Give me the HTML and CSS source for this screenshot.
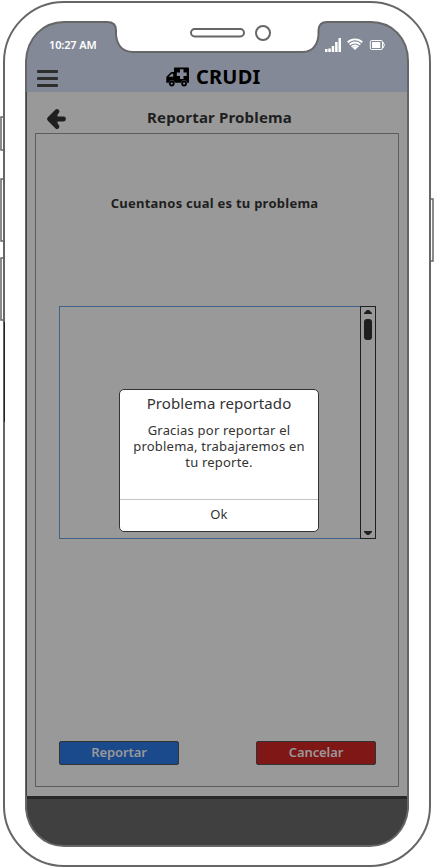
FILE: index.html
```
<!DOCTYPE html>
<html lang="es">
<head>
<meta charset="utf-8">
<meta name="viewport" content="width=device-width, initial-scale=1">
<title>CRUDI</title>
<link rel="stylesheet" href="styles.css">
</head>
<body>
<div class="device">
  <div class="screen">
    <header class="topbar">
      <div class="status"><span class="time">10:27 AM</span>
        <svg class="indicators" width="62" height="16" viewBox="0 0 62 16" fill="#fff">
          <path d="M0 12h2.500v3H0zM3.300 11.500h2.500V15H3.300zM6.700 9h2.500v6H6.700zM10.100 5h2.500v10h-2.500zM13.500 1H16v14h-2.500z"/>
          <path d="M30 13l-2.500-2.600a3.600 3.600 0 0 1 5 0z"/>
          <path d="M22.700 5.300a10.500 10.500 0 0 1 14.600 0M24.700 7.700a7.500 7.500 0 0 1 10.600 0M26.600 9.800a4.800 4.800 0 0 1 6.800 0" fill="none" stroke="#fff" stroke-width="1.900"/>
          <rect x="45.300" y="3.500" width="12.200" height="9" rx="1.400" fill="none" stroke="#fff"/>
          <path d="M47 5h8.300v6H47z"/><path d="M58 5q2.800 3 0 6" fill="none" stroke="#fff"/>
        </svg>
      </div>
      <div class="appbar">
        <div class="menu"><i></i><i></i><i></i></div>
        <div class="brand">
          <svg width="24" height="20" viewBox="0 0 24 20">
            <path d="M9 .5h13q1 0 1 1v14.200h-1.800a3.200 3.200 0 0 0-6.200 0H8.800a3.200 3.200 0 0 0-6.200 0H.3v-5q0-1 .8-1.800l3-3q.8-.8 2-.8H8V1.500Q8 .5 9 .5z"/>
            <path d="M14 2.300h3.500v3.200h3.200v3.400h-3.200v3.200H14V8.900h-3.200V5.500H14zM2.500 9.700 5.500 6.700H7.200V9.700z" fill="#838997"/>
            <circle cx="5.700" cy="16.500" r="2" fill="#838997" stroke="#000" stroke-width="1.800"/>
            <circle cx="18.100" cy="16.500" r="2" fill="#838997" stroke="#000" stroke-width="1.800"/>
          </svg>
          <span>CRUDI</span>
        </div>
      </div>
    </header>
    <div class="titlebar">
      <svg class="back" width="22" height="22" viewBox="0 0 22 22"><path d="M4.500 11 11.500 4.500V18z" fill="#1f1f1f"/><path d="M11 3.500 3.500 11 11 18.500M4 11h13.500" fill="none" stroke="#1f1f1f" stroke-width="4.800" stroke-linecap="round" stroke-linejoin="round"/></svg>
      <h1>Reportar Problema</h1>
    </div>
    <main class="panel">
      <h2>Cuentanos cual es tu problema</h2>
      <div class="field">
        <div class="entry"></div>
        <div class="scrollbar">
          <svg width="8" height="4" viewBox="0 0 8 4"><path d="M0 4V3l3-3h2l3 3v1z"/></svg>
          <span class="thumb"></span>
          <svg width="8" height="4" viewBox="0 0 8 4"><path d="M0 0v1l3 3h2l3-3V0z"/></svg>
        </div>
      </div>
      <div class="actions"><div class="btn primary">Reportar</div><div class="btn danger">Cancelar</div></div>
    </main>
    <footer class="footer"></footer>
  </div>
  <div class="dialog">
    <h3>Problema reportado</h3>
    <p>Gracias por reportar el<br>problema, trabajaremos en<br>tu reporte.</p>
    <div class="ok">Ok</div>
  </div>
  <svg class="frame" width="434" height="867" viewBox="0 0 434 867">
    <path fill="#fff" fill-rule="evenodd" d="M0 0H434V867H0z M64 22H107Q116 22 116 30V35Q118 52 133 52H303Q317 51 318.500 35V30Q319 22 327 22H371C392 22 408 38 408 61V809C406 830 391 846 370 846H64C43 846 28 830 26 809V61C27 38 43 22 64 22z"/>
    <g fill="none" stroke="#666" stroke-width="2">
      <path d="M64 2H370C403 2 430 29 430 62V806C430 838 403 866 370 866H64C31 866 4 838 4 806V62C4 29 31 2 64 2z"/>
      <path d="M64 22H107Q116 22 116 30V35Q118 52 133 52H303Q317 51 318.500 35V30Q319 22 327 22H371C392 22 408 38 408 61V809C406 830 391 846 370 846H64C43 846 28 830 26 809V61C27 38 43 22 64 22z"/>
      <rect x="191" y="29" width="53" height="7.500" rx="3.700"/>
      <circle cx="263" cy="33" r="7"/>
      <path d="M4 117H1V150H4M4 179H1V241H4M4 258H1V320H4M431 199H433V261H431" stroke-width="1.500"/>
    </g>
    <path d="M26.500 92V796" stroke="#444"/>
    <path d="M4.500 322V422" stroke="#222"/>
  </svg>
</div>
</body>
</html>
```
FILE: styles.css
```
* { box-sizing: border-box; }
body { margin: 0; background: #fff; font-family: "Noto Sans", sans-serif; color: #1f1f1f; }
h1, h2, h3, p { margin: 0; }
.device { position: relative; width: 434px; height: 867px; padding: 21px 25px 20px; overflow: hidden; }
.screen { display: flex; flex-direction: column; height: 826px; background: #999; }
.topbar { height: 71px; background: #838997; }
.status { display: flex; justify-content: space-between; align-items: center; height: 43px; padding: 4px 23px 0 24px; }
.time { color: #fff; font-size: 11px; font-weight: 600; line-height: 16px; letter-spacing: -0.15px; }
.indicators { margin-right: -1px; }
.appbar { display: flex; align-items: flex-start; padding-left: 12px; }
.menu { display: grid; gap: 4px; width: 20px; padding-top: 6px; }
.menu i { height: 3px; border-radius: 1px; background: #2d2d2d; width: 21px; }
.brand { display: flex; align-items: center; gap: 6px; margin-left: 109px; height: 26px; color: #000; font-size: 20px; font-weight: 700; line-height: 26px; letter-spacing: 0.2px; }
.titlebar { display: flex; align-items: center; height: 41px; padding: 10px 0 0 21px; }
.back { margin-top: 3px; }
h1 { margin: -2px 0 0 79px; font-size: 15px; line-height: 20px; letter-spacing: 0.17px; white-space: nowrap; }
.panel { display: flex; flex-direction: column; align-items: stretch; margin: 0 10px; padding: 60px 22px 21px 23px; height: 654px; border: 1px solid #5d5d5d; }
h2 { font-size: 13px; line-height: 18px; letter-spacing: 0.25px; text-align: center; padding-right: 6px; white-space: nowrap; }
.field { display: flex; height: 233px; margin-top: 94px; }
.entry { flex: 1; border: 1px solid #3f648a; border-right: 0; }
.scrollbar { display: flex; flex-direction: column; align-items: center; width: 16px; border: 1px solid #1f1f1f; padding: 3px 0; fill: #1f1f1f; }
.thumb { width: 8px; height: 21px; margin: 5px 0 auto; border-radius: 3px; background: #1f1f1f; }
.actions { display: flex; justify-content: space-between; margin-top: auto; }
.btn { width: 120px; height: 24px; border: 1px solid #333; border-radius: 2px; color: #999; font-size: 13px; font-weight: 600; line-height: 21px; letter-spacing: -0.1px; text-align: center; }
.primary { background: #1a4a8c; }
.danger { background: #7f1717; }
.footer { flex: 1; margin-top: 9px; border-top: 3px solid #262827; background: #404040; }
.dialog { position: absolute; left: 119px; top: 389px; width: 200px; height: 143px; border: 1px solid #333; border-radius: 5px; background: #fff; color: #333; text-align: center; display: flex; flex-direction: column; }
h3 { margin-top: 3px; font-size: 15px; line-height: 20px; font-weight: 400; letter-spacing: 0.1px; white-space: nowrap; }
.dialog p { margin-top: 9px; font-size: 13px; line-height: 16px; letter-spacing: 0.2px; white-space: nowrap; }
.ok { margin-top: auto; height: 32px; border-top: 1px solid #c4c4c4; font-size: 13px; line-height: 29px; letter-spacing: 0.2px; }
.frame { position: absolute; left: 0; top: 0; }
```
